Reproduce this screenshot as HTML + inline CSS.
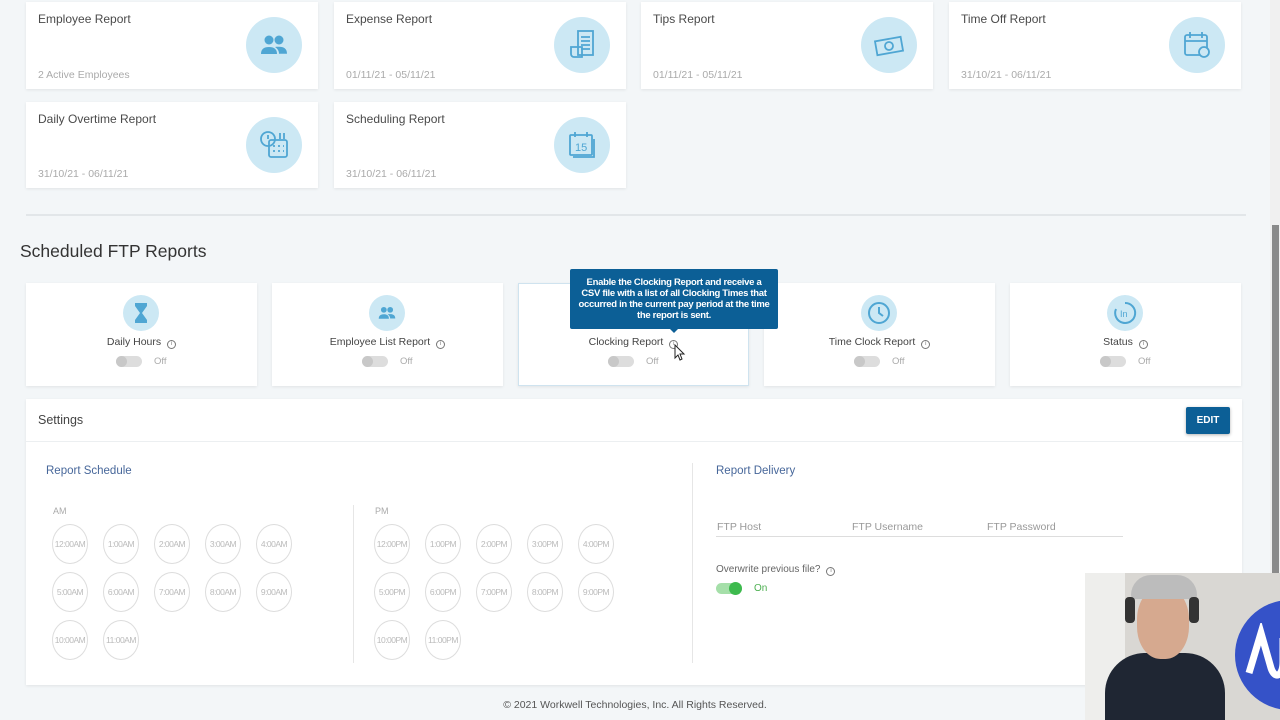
<!DOCTYPE html>
<html><head><meta charset="utf-8"><style>
*{margin:0;padding:0;box-sizing:border-box}
body{width:1280px;height:720px;overflow:hidden;background:#f3f6f8;font-family:"Liberation Sans",sans-serif;position:relative;color:#444}
.a{position:absolute}
.card{position:absolute;background:#fff;box-shadow:0 1px 3px rgba(0,0,0,.08)}
.rt{position:absolute;left:12px;top:10px;font-size:12px;color:#4a4a4a}
.rs{position:absolute;left:12px;top:67px;font-size:10.5px;color:#aaa}
.ic{position:absolute;left:220px;top:15px;width:56px;height:56px;border-radius:50%;background:#cce8f4;display:flex;align-items:center;justify-content:center}
.fc{position:absolute;top:283px;width:231px;height:103px;background:#fff;box-shadow:0 1px 3px rgba(0,0,0,.08);text-align:center}
.fi{position:absolute;left:97px;top:12px;width:36px;height:36px;border-radius:50%;background:#cce8f4;display:flex;align-items:center;justify-content:center}
.fl{position:absolute;left:0;right:0;top:53px;font-size:10.5px;color:#444}
.info{display:inline-block;width:9px;height:9px;border:1px solid #777;border-radius:50%;margin-left:6px;vertical-align:0px;font-size:6px;line-height:7px;text-align:center;color:#777}
.tg{position:absolute;top:73px;width:26px;height:11px;border-radius:6px;background:#ddd}
.tg:before{content:"";position:absolute;left:0;top:0;width:11px;height:11px;border-radius:50%;background:#c8c8c8}
.off{position:absolute;top:73px;font-size:9.5px;color:#aaa}
.tc{position:absolute;width:36px;height:40px;border:1px solid #ddd;border-radius:50%;font-size:8.5px;color:#bbb;display:flex;align-items:center;justify-content:center;letter-spacing:-.5px}
</style></head><body>

<div class="card" style="left:26px;top:2px;width:292px;height:87px"><div class="rt">Employee Report</div><div class="rs">2 Active Employees</div><div class="ic"><svg width="28" height="22" viewBox="0 0 28 22" fill="#4fa6d3"><circle cx="9" cy="6" r="4.5"/><circle cx="19" cy="6" r="4.5"/><path d="M1 20c0-5 3-7 8-7s8 2 8 7z"/><path d="M15 13c1-.3 2-.3 4-.3 5 0 8 2 8 7h-8c0-3-1.5-5-4-6.7z"/></svg></div></div>
<div class="card" style="left:334px;top:2px;width:292px;height:87px"><div class="rt">Expense Report</div><div class="rs">01/11/21 - 05/11/21</div><div class="ic"><svg width="28" height="32" viewBox="0 0 28 32" fill="none" stroke="#4fa6d3" stroke-width="1.8"><rect x="10" y="2" width="15" height="24"/><path d="M13 8h9M13 12h9M13 16h9M13 20h9"/><path d="M3 18h11v10H6a3 3 0 0 1-3-3z"/></svg></div></div>
<div class="card" style="left:641px;top:2px;width:292px;height:87px"><div class="rt">Tips Report</div><div class="rs">01/11/21 - 05/11/21</div><div class="ic"><svg width="32" height="24" viewBox="0 0 32 24" fill="none" stroke="#4fa6d3" stroke-width="1.8"><rect x="3" y="6" width="26" height="14" transform="rotate(-10 16 13)"/><circle cx="16" cy="13" r="4"/></svg></div></div>
<div class="card" style="left:949px;top:2px;width:292px;height:87px"><div class="rt">Time Off Report</div><div class="rs">31/10/21 - 06/11/21</div><div class="ic"><svg width="30" height="30" viewBox="0 0 30 30" fill="none" stroke="#4fa6d3" stroke-width="1.8"><rect x="3" y="5" width="22" height="20" rx="2"/><path d="M3 11h22M8 2v6M20 2v6"/><circle cx="22" cy="22" r="5" fill="#cce8f4"/></svg></div></div>
<div class="card" style="left:26px;top:102px;width:292px;height:86px"><div class="rt">Daily Overtime Report</div><div class="rs" style="top:66px">31/10/21 - 06/11/21</div><div class="ic"><svg width="32" height="32" viewBox="0 0 32 32" fill="none" stroke="#4fa6d3" stroke-width="1.8"><circle cx="10" cy="10" r="7"/><path d="M10 6v4"/><rect x="11" y="11" width="18" height="17" rx="2"/><path d="M15 17h2M20 17h2M25 17h1M15 22h2M20 22h2M25 22h1M22 4v6M26 4v6"/></svg></div></div>
<div class="card" style="left:334px;top:102px;width:292px;height:86px"><div class="rt">Scheduling Report</div><div class="rs" style="top:66px">31/10/21 - 06/11/21</div><div class="ic"><svg width="30" height="30" viewBox="0 0 30 30" fill="none" stroke="#4fa6d3" stroke-width="1.8"><rect x="3" y="5" width="22" height="20" rx="1"/><path d="M8 2v5M20 2v5M6 27h21V9"/><text x="8" y="21" font-size="11" fill="#4fa6d3" stroke="none" font-family="Liberation Sans">15</text></svg></div></div>

<div class="a" style="left:26px;top:214px;width:1220px;height:2px;background:#e2e6e9"></div>
<div class="a" style="left:20px;top:241px;font-size:17.5px;color:#333">Scheduled FTP Reports</div>

<div class="fc" style="left:26px"><div class="fi"><svg width="12" height="20" viewBox="0 0 12 20" fill="#4fa6d3"><path d="M0 0h12v3L7 10l5 7v3H0v-3l5-7-5-7z"/></svg></div><div class="fl">Daily Hours<span class="info">i</span></div><div class="tg" style="left:90px"></div><div class="off" style="left:128px">Off</div></div>
<div class="fc" style="left:272px"><div class="fi"><svg width="20" height="14" viewBox="0 0 28 22" fill="#4fa6d3"><circle cx="9" cy="6" r="4.5"/><circle cx="19" cy="6" r="4.5"/><path d="M1 20c0-5 3-7 8-7s8 2 8 7z"/><path d="M15 13c1-.3 2-.3 4-.3 5 0 8 2 8 7h-8c0-3-1.5-5-4-6.7z"/></svg></div><div class="fl">Employee List Report<span class="info">i</span></div><div class="tg" style="left:90px"></div><div class="off" style="left:128px">Off</div></div>
<div class="fc" style="left:518px;border:1px solid #cfe3ef"><div class="fl" style="top:52px">Clocking Report<span class="info">i</span></div><div class="tg" style="left:89px;top:72px"></div><div class="off" style="left:127px;top:72px">Off</div></div>
<div class="fc" style="left:764px"><div class="fi"><svg width="24" height="24" viewBox="0 0 24 24" fill="none" stroke="#4fa6d3" stroke-width="2"><circle cx="12" cy="12" r="10"/><path d="M12 6v6l4 3"/></svg></div><div class="fl">Time Clock Report<span class="info">i</span></div><div class="tg" style="left:90px"></div><div class="off" style="left:128px">Off</div></div>
<div class="fc" style="left:1010px"><div class="fi"><svg width="26" height="26" viewBox="0 0 26 26" fill="none" stroke="#4fa6d3" stroke-width="2"><path d="M13 3a10 10 0 1 1-9 6"/><text x="8" y="17" font-size="9" fill="#4fa6d3" stroke="none" font-family="Liberation Sans">In</text></svg></div><div class="fl">Status<span class="info">i</span></div><div class="tg" style="left:90px"></div><div class="off" style="left:128px">Off</div></div>

<div class="a" style="left:570px;top:269px;width:208px;height:60px;background:#0c5f96;border-radius:2px;color:#fff;font-size:9.5px;font-weight:bold;text-align:center;line-height:11px;padding-top:8px;letter-spacing:-.3px">Enable the Clocking Report and receive a<br>CSV file with a list of all Clocking Times that<br>occurred in the current pay period at the time<br>the report is sent.</div>
<div class="a" style="left:669px;top:328px;width:0;height:0;border-left:5px solid transparent;border-right:5px solid transparent;border-top:5px solid #0c5f96"></div>
<svg class="a" style="left:674px;top:344px" width="12" height="17" viewBox="0 0 12 17"><path d="M1 1v13l3-3 2 5 2-1-2-5h4z" fill="#fff" stroke="#222"/></svg>

<div class="card" style="left:26px;top:399px;width:1216px;height:286px">
<div class="a" style="left:12px;top:14px;font-size:12.5px;color:#444">Settings</div>
<div class="a" style="left:1160px;top:8px;width:44px;height:27px;background:#0c5f96;border-radius:2px;color:#fff;font-size:10px;font-weight:bold;display:flex;align-items:center;justify-content:center;box-shadow:0 1px 3px rgba(0,0,0,.3)">EDIT</div>
<div class="a" style="left:0;top:42px;width:1216px;height:1px;background:#eceff1"></div>
<div class="a" style="left:20px;top:66px;font-size:11.5px;color:#47679a">Report Schedule</div>
<div class="a" style="left:27px;top:107px;font-size:9px;color:#aaa">AM</div>
<div class="a" style="left:349px;top:107px;font-size:9px;color:#aaa">PM</div>
<div class="a" style="left:327px;top:106px;width:1px;height:158px;background:#e6e6e6"></div>
<div class="a" style="left:666px;top:64px;width:1px;height:200px;background:#e6e6e6"></div>
<div class="a" style="left:690px;top:66px;font-size:11.5px;color:#47679a">Report Delivery</div>
<div class="a" style="left:691px;top:122px;font-size:10.5px;color:#999">FTP Host</div>
<div class="a" style="left:826px;top:122px;font-size:10.5px;color:#999">FTP Username</div>
<div class="a" style="left:961px;top:122px;font-size:10.5px;color:#999">FTP Password</div>
<div class="a" style="left:690px;top:137px;width:407px;height:1px;background:#ddd"></div>
<div class="a" style="left:690px;top:165px;font-size:10px;color:#666">Overwrite previous file?<span class="info">i</span></div>
<div class="a" style="left:690px;top:184px;width:26px;height:11px;border-radius:6px;background:#a5dfa9"></div>
<div class="a" style="left:703px;top:183px;width:13px;height:13px;border-radius:50%;background:#3dba4e"></div>
<div class="a" style="left:728px;top:184px;font-size:10px;color:#4caf50">On</div>
</div>

<div id="tc"></div>
<script>
var h='',am=['12:00AM','1:00AM','2:00AM','3:00AM','4:00AM','5:00AM','6:00AM','7:00AM','8:00AM','9:00AM','10:00AM','11:00AM'];
for(var i=0;i<12;i++){var x=i%5,y=Math.floor(i/5);
h+='<div class="tc" style="left:'+(52+x*51)+'px;top:'+(524+y*48)+'px">'+am[i]+'</div>';
h+='<div class="tc" style="left:'+(374+x*51)+'px;top:'+(524+y*48)+'px">'+am[i].replace('AM','PM')+'</div>';}
document.getElementById('tc').innerHTML=h;
</script>

<div class="a" style="left:0;top:705px;width:1270px;text-align:center;font-size:10.5px;color:#555;line-height:0">© 2021 Workwell Technologies, Inc. All Rights Reserved.</div>

<div class="a" style="left:1270px;top:0;width:10px;height:720px;background:#f0f0f0"></div>
<div class="a" style="left:1272px;top:225px;width:7px;height:348px;background:#8a8a8a"></div>

<div class="a" style="left:1085px;top:573px;width:195px;height:147px;background:#d9d7d3;overflow:hidden">
<div class="a" style="left:0;top:0;width:40px;height:147px;background:#eeeeec"></div>
<div class="a" style="left:150px;top:27px;width:110px;height:110px;border-radius:50%;background:#3552c8"></div>
<svg class="a" style="left:160px;top:50px" width="40" height="60"><path d="M4 50L16 10l10 35c4 12 12 8 12-6V15" fill="none" stroke="#fff" stroke-width="7"/></svg>
<div class="a" style="left:20px;top:80px;width:120px;height:80px;border-radius:40px 40px 0 0;background:#1f2633"></div>
<div class="a" style="left:52px;top:14px;width:52px;height:72px;border-radius:45%;background:#d6a98f"></div>
<div class="a" style="left:46px;top:2px;width:66px;height:24px;border-radius:30px 30px 6px 6px;background:#bcbcbc"></div>
<div class="a" style="left:40px;top:24px;width:10px;height:26px;border-radius:4px;background:#333"></div>
<div class="a" style="left:104px;top:24px;width:10px;height:26px;border-radius:4px;background:#333"></div>
</div>
</body></html>
